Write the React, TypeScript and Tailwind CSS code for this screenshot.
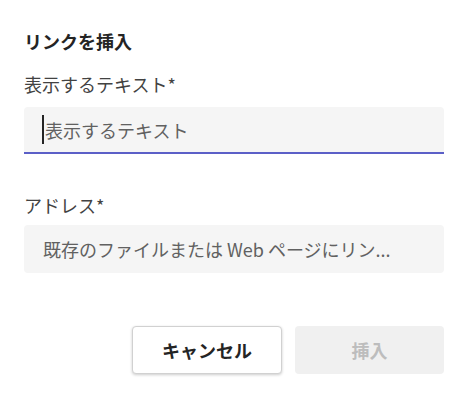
export default function App() {
  return (
    <main
      className="min-h-screen w-[467px] bg-white"
      style={{ fontFamily: '"Noto Sans CJK JP", "Noto Sans", sans-serif' }}
    >
      <div className="w-[444px] pl-6 pt-[29px]">
        <h1 className="text-[18px] font-bold leading-6 text-[#242424]">
          リンクを挿入
        </h1>

        <label className="mt-[19px] block text-[18px] leading-6 text-[#424242]">
          表示するテキスト*
        </label>
        <div className="mt-[11px] flex h-[47px] items-center rounded-t-[4px] border-b-2 border-[#5b5fc7] bg-[#f5f5f5] pl-[18px]">
          <span className="h-[29px] w-[2px] bg-[#242424]" />
          <span className="ml-[1px] text-[18px] leading-6 text-[#616161]">
            表示するテキスト
          </span>
        </div>

        <label className="mt-[39px] block text-[18px] leading-6 text-[#424242]">
          アドレス*
        </label>
        <div className="mt-2 flex h-12 items-center rounded-[4px] bg-[#f5f5f5] pl-[19px]">
          <span className="text-[18px] leading-6 text-[#616161]">
            既存のファイルまたは Web ページにリン...
          </span>
        </div>

        <div className="mt-[53px] flex justify-end gap-[13px]">
          <button className="h-12 w-[150px] rounded-[4px] border border-[#d1d1d1] bg-white text-[18px] font-bold text-[#242424] shadow-[0_1px_3px_rgba(0,0,0,0.2)]">
            キャンセル
          </button>
          <button className="h-12 w-[149px] rounded-[4px] bg-[#f0f0f0] text-[18px] font-bold text-[#bdbdbd]">
            挿入
          </button>
        </div>
      </div>
    </main>
  );
}
